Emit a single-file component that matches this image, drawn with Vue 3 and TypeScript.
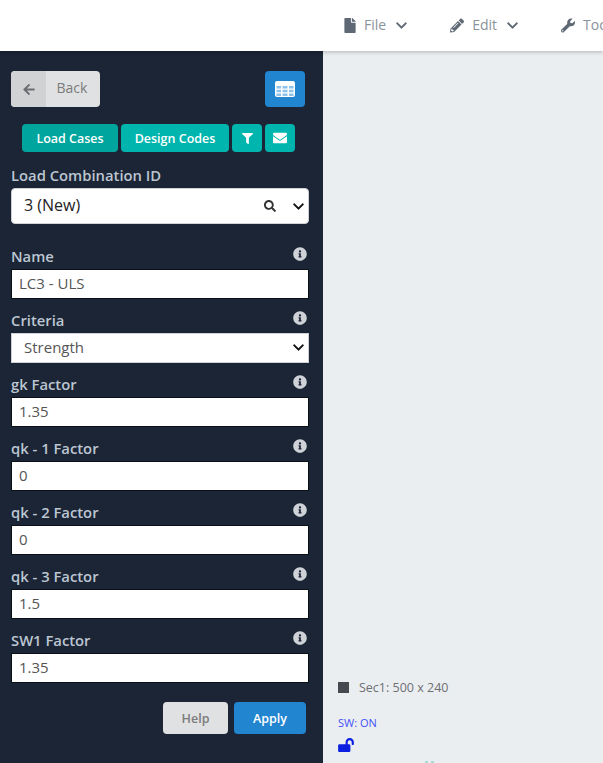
<template>
  <div class="page">
    <header class="topbar">
      <div v-for="item in menuItems" :key="item.label" class="menu-item">
        <svg class="menu-icon" :viewBox="item.viewBox" :style="{ width: item.iconWidth + 'px' }"><path :d="item.icon" /></svg>
        <span class="menu-label">{{ item.label }}</span>
        <svg class="menu-chevron" viewBox="0 0 448 512"><path :d="chevronPath" /></svg>
      </div>
    </header>

    <div class="body">
      <aside class="sidebar">
        <div class="head-row">
          <button class="back-btn">
            <span class="back-icon">
              <svg viewBox="0 0 448 512"><path d="M257.5 445.1l-22.2 22.2c-9.4 9.4-24.6 9.4-33.9 0L7 273c-9.4-9.4-9.4-24.6 0-33.9L201.4 44.7c9.4-9.4 24.6-9.4 33.9 0l22.2 22.2c9.5 9.5 9.3 25-.4 34.3L136.6 216H424c13.3 0 24 10.7 24 24v32c0 13.3-10.7 24-24 24H136.6l120.5 114.8c9.8 9.3 10 24.8.4 34.3z" /></svg>
            </span>
            <span class="back-text">Back</span>
          </button>
          <button class="table-btn">
            <svg viewBox="0 0 20 16">
              <rect width="20" height="16" rx="2" fill="#fff" />
              <path d="M1.5 5H6v2.4H1.5zM7.5 5h5v2.4h-5zM14 5h4.5v2.4H14zM1.5 8.8H6v2.4H1.5zM7.5 8.8h5v2.4h-5zM14 8.8h4.5v2.4H14zM1.5 12.6H6V15H1.5zM7.5 12.6h5V15h-5zM14 12.6h4.5V15H14z" fill="#8fc3ea" />
            </svg>
          </button>
        </div>

        <div class="teal-row">
          <button class="teal-btn active load-cases">Load Cases</button>
          <button class="teal-btn design-codes">Design Codes</button>
          <button class="teal-btn icon-only filter">
            <svg viewBox="0 0 512 512"><path d="M487.976 0H24.028C2.71 0-8.047 25.866 7.058 40.971L192 225.941V432c0 7.831 3.821 15.17 10.237 19.662l80 55.98C298.02 518.69 320 507.493 320 487.98V225.941l184.947-184.97C520.021 25.896 509.338 0 487.976 0z" /></svg>
          </button>
          <button class="teal-btn icon-only mail">
            <svg viewBox="0 0 512 512"><path d="M502.3 190.8c3.9-3.1 9.7-.2 9.7 4.7V400c0 26.5-21.5 48-48 48H48c-26.5 0-48-21.5-48-48V195.6c0-5 5.7-7.8 9.7-4.7 22.4 17.4 52.1 39.5 154.1 113.6 21.1 15.4 56.7 47.8 92.2 47.6 35.7.3 72-32.8 92.3-47.6 102-74.1 131.6-96.3 154-113.7zM256 320c23.2.4 56.6-29.2 73.4-41.4 132.7-96.3 142.8-104.7 173.4-128.7 5.8-4.5 9.2-11.5 9.2-18.9v-19c0-26.5-21.5-48-48-48H48C21.5 64 0 85.5 0 112v19c0 7.4 3.4 14.3 9.2 18.9 30.6 23.9 40.7 32.4 173.4 128.7 16.8 12.2 50.2 41.8 73.4 41.4z" /></svg>
          </button>
        </div>

        <div class="id-block">
          <div class="label id-label">Load Combination ID</div>
          <div class="id-select">
            <span class="id-value">3 (New)</span>
            <svg class="search-icon" viewBox="0 0 512 512"><path d="M505 442.7L405.3 343c-4.5-4.5-10.6-7-17-7H372c27.6-35.3 44-79.7 44-128C416 93.1 322.9 0 208 0S0 93.1 0 208s93.1 208 208 208c48.3 0 92.7-16.4 128-44v16.3c0 6.4 2.5 12.5 7 17l99.7 99.7c9.4 9.4 24.6 9.4 33.9 0l28.3-28.3c9.4-9.4 9.4-24.6.1-34zM208 336c-70.7 0-128-57.2-128-128 0-70.7 57.2-128 128-128 70.7 0 128 57.2 128 128 0 70.7-57.2 128-128 128z" /></svg>
            <svg class="select-chevron" viewBox="0 0 448 512"><path :d="chevronPath" /></svg>
          </div>
        </div>

        <div class="fields">
          <div v-for="field in fields" :key="field.label" class="field">
            <div class="field-head">
              <span class="label">{{ field.label }}</span>
              <svg class="info-icon" viewBox="0 0 512 512"><path d="M256 8C119.043 8 8 119.083 8 256c0 136.997 111.043 248 248 248s248-111.003 248-248C504 119.083 392.957 8 256 8zm0 110c23.196 0 42 18.804 42 42s-18.804 42-42 42-42-18.804-42-42 18.804-42 42-42zm56 254c0 6.627-5.373 12-12 12h-88c-6.627 0-12-5.373-12-12v-24c0-6.627 5.373-12 12-12h12v-64h-12c-6.627 0-12-5.373-12-12v-24c0-6.627 5.373-12 12-12h64c6.627 0 12 5.373 12 12v100h12c6.627 0 12 5.373 12 12v24z" /></svg>
            </div>
            <div v-if="field.isSelect" class="box select-box">
              <span>{{ field.value }}</span>
              <svg class="select-chevron" viewBox="0 0 448 512"><path :d="chevronPath" /></svg>
            </div>
            <div v-else class="box">{{ field.value }}</div>
          </div>
        </div>

        <div class="actions">
          <button class="help-btn">Help</button>
          <button class="apply-btn">Apply</button>
        </div>
      </aside>

      <main class="canvas">
        <div class="legend">
          <span class="swatch"></span>
          <span>Sec1: 500 x 240</span>
        </div>
        <div class="sw-text">SW: ON</div>
        <svg class="lock-icon" viewBox="0 0 576 512"><path d="M423.5 0C339.5.3 272 69.5 272 153.5V224H48c-26.5 0-48 21.5-48 48v192c0 26.5 21.5 48 48 48h352c26.5 0 48-21.5 48-48V272c0-26.5-21.5-48-48-48h-48v-71.1c0-39.6 31.7-72.5 71.3-72.9 40-.4 72.7 32.1 72.7 72v80c0 13.3 10.7 24 24 24h32c13.3 0 24-10.7 24-24v-80C576 68 507.5-.3 423.5 0z" /></svg>
        <div class="cut-marks">
          <span></span>
          <span></span>
        </div>
      </main>
    </div>
  </div>
</template>

<script setup lang="ts">
interface MenuItem {
  label: string
  icon: string
  viewBox: string
  iconWidth: number
}

interface Field {
  label: string
  value: string
  isSelect?: boolean
}

const chevronPath =
  'M207.029 381.476L12.686 187.132c-9.373-9.373-9.373-24.569 0-33.941l22.667-22.667c9.357-9.357 24.522-9.375 33.901-.04L224 284.505l154.745-154.021c9.379-9.335 24.544-9.317 33.901.04l22.667 22.667c9.373 9.373 9.373 24.569 0 33.941L240.971 381.476c-9.373 9.372-24.569 9.372-33.942 0z'

const menuItems: MenuItem[] = [
  {
    label: 'File',
    viewBox: '0 0 384 512',
    iconWidth: 12,
    icon: 'M224 136V0H24C10.7 0 0 10.7 0 24v464c0 13.3 10.7 24 24 24h336c13.3 0 24-10.7 24-24V160H248c-13.2 0-24-10.8-24-24zm160-14.1v6.1H256V0h6.1c6.4 0 12.5 2.5 17 7l97.9 98c4.5 4.5 7 10.6 7 16.9z'
  },
  {
    label: 'Edit',
    viewBox: '0 0 512 512',
    iconWidth: 14,
    icon: 'M497.9 142.1l-46.1 46.1c-4.7 4.7-12.3 4.7-17 0l-111-111c-4.7-4.7-4.7-12.3 0-17l46.1-46.1c18.7-18.7 49.1-18.7 67.9 0l60.1 60.1c18.8 18.7 18.8 49.1 0 67.9zM284.2 99.8L21.6 362.4.4 483.9c-2.9 16.4 11.4 30.6 27.8 27.8l121.5-21.3 262.6-262.6c4.7-4.7 4.7-12.3 0-17l-111-111c-4.8-4.7-12.4-4.7-17.1 0zM124.1 339.9c-5.5-5.5-5.5-14.3 0-19.8l154-154c5.5-5.5 14.3-5.5 19.8 0s5.5 14.3 0 19.8l-154 154c-5.5 5.5-14.3 5.5-19.8 0zM88 424h48v36.3l-64.5 11.3-31.1-31.1L51.7 376H88v48z'
  },
  {
    label: 'Tools',
    viewBox: '0 0 512 512',
    iconWidth: 14,
    icon: 'M507.73 109.1c-2.24-9.03-13.54-12.09-20.12-5.51l-74.36 74.36-67.88-11.31-11.31-67.88 74.36-74.36c6.62-6.62 3.43-17.9-5.66-20.16-47.38-11.74-99.55.91-136.58 37.93-39.64 39.64-50.55 97.1-34.05 147.2L18.74 402.76c-24.99 24.99-24.99 65.51 0 90.5 24.99 24.99 65.51 24.99 90.5 0l213.21-213.21c50.12 16.71 107.47 5.68 147.37-34.22 37.07-37.07 49.7-89.32 37.91-136.73zM64 472c-13.25 0-24-10.75-24-24 0-13.26 10.75-24 24-24s24 10.74 24 24c0 13.25-10.75 24-24 24z'
  }
]

const fields: Field[] = [
  { label: 'Name', value: 'LC3 - ULS' },
  { label: 'Criteria', value: 'Strength', isSelect: true },
  { label: 'gk Factor', value: '1.35' },
  { label: 'qk - 1 Factor', value: '0' },
  { label: 'qk - 2 Factor', value: '0' },
  { label: 'qk - 3 Factor', value: '1.5' },
  { label: 'SW1 Factor', value: '1.35' }
]
</script>

<style>
html,
body {
  margin: 0;
  overflow: hidden;
}
</style>

<style scoped>
.page {
  width: 603px;
  height: 763px;
  display: flex;
  flex-direction: column;
  overflow: hidden;
  font-family: "Open Sans", "Liberation Sans", sans-serif;
  background-color: #ebeef1;
}

.topbar {
  position: relative;
  z-index: 1;
  flex: 0 0 51px;
  display: flex;
  align-items: center;
  padding-left: 344px;
  gap: 43px;
  background-color: #fff;
  box-shadow: 0 1px 4px rgba(0, 0, 0, 0.25);
  white-space: nowrap;
  font-size: 14px;
}

.menu-item {
  display: flex;
  align-items: center;
  flex-shrink: 0;
}

.menu-icon {
  height: 15px;
  fill: #5f6975;
}

.menu-label {
  margin-left: 8px;
  margin-top: -2px;
  color: #8a929b;
}

.menu-chevron {
  width: 11px;
  height: 13px;
  margin-left: 10px;
  fill: #5f6975;
}

.body {
  flex: 1;
  display: flex;
  min-height: 0;
}

.sidebar {
  flex: 0 0 323px;
  box-sizing: border-box;
  padding: 20px 14px 0 11px;
  background-color: #1b2535;
}

.head-row {
  display: flex;
  justify-content: space-between;
  padding-right: 4px;
}

button {
  font-family: inherit;
  border: none;
  padding: 0;
}

.back-btn {
  width: 89px;
  height: 36px;
  display: flex;
  overflow: hidden;
  border-radius: 4px;
  background-color: #e0e1e2;
  color: #7b7b7d;
  font-size: 14px;
}

.back-icon {
  width: 35px;
  height: 100%;
  display: flex;
  align-items: center;
  justify-content: center;
  background-color: #d0d2d4;
}

.back-icon svg {
  width: 12px;
  height: 13px;
  fill: #6b6d70;
}

.back-text {
  flex: 1;
  align-self: center;
  text-align: center;
  margin-top: -3px;
  padding-right: 2px;
}

.table-btn {
  width: 40px;
  height: 36px;
  display: flex;
  align-items: center;
  justify-content: center;
  border-radius: 4px;
  background-color: #2185d0;
}

.table-btn svg {
  width: 20px;
  height: 16px;
}

.teal-row {
  display: flex;
  gap: 3px;
  margin-top: 17px;
  padding-left: 11px;
}

.teal-btn {
  height: 28px;
  border-radius: 4px;
  background-color: #00b5ad;
  color: #fff;
  font-size: 12.5px;
  font-weight: 600;
}

.teal-btn.active {
  background-color: #00a69e;
}

.load-cases {
  width: 96px;
}

.design-codes {
  width: 108px;
}

.icon-only {
  width: 30px;
  display: flex;
  align-items: center;
  justify-content: center;
}

.filter svg {
  width: 11px;
  height: 11px;
}

.mail svg {
  width: 14px;
  height: 14px;
}

.icon-only svg {
  fill: #fff;
}

.id-block {
  margin-top: 13px;
}

.label {
  color: #bcc6d2;
  font-size: 14.8px;
  font-weight: 600;
  line-height: 20px;
}

.id-select {
  display: flex;
  align-items: center;
  height: 36px;
  margin-top: 3px;
  padding: 0 4px 0 12px;
  box-sizing: border-box;
  border-radius: 4px;
  background-color: #fff;
  border: 1px solid #cfd3d8;
  color: #222;
  font-size: 16px;
}

.id-value {
  flex: 1;
  margin-top: -2px;
}

.search-icon {
  width: 12px;
  height: 12px;
  margin-right: 17px;
  fill: #333;
}

.select-chevron {
  width: 11px;
  height: 13px;
  fill: #111;
  flex-shrink: 0;
}

.fields {
  margin-top: 22px;
  display: flex;
  flex-direction: column;
  gap: 11px;
}

.field-head {
  display: flex;
  align-items: flex-start;
  justify-content: space-between;
  padding-right: 2px;
  height: 23px;
}

.info-icon {
  width: 14px;
  height: 14px;
  fill: #cfd3d8;
  margin-top: 1px;
}

.box {
  height: 30px;
  box-sizing: border-box;
  padding: 0 7px 2px;
  display: flex;
  align-items: center;
  background-color: #fff;
  border: 1px solid #0b0f16;
  color: #555;
  font-size: 15px;
}

.select-box {
  justify-content: space-between;
  padding: 0 4px 2px 12px;
  border-color: #cfd3d8;
}

.actions {
  display: flex;
  justify-content: flex-end;
  gap: 6px;
  margin-top: 19px;
  padding-right: 3px;
}

.help-btn,
.apply-btn {
  height: 32px;
  border-radius: 4px;
  font-size: 12.5px;
  font-weight: 600;
}

.help-btn {
  width: 65px;
  background-color: #e0e1e2;
  color: #7b7b7d;
}

.apply-btn {
  width: 72px;
  background-color: #2185d0;
  color: #fff;
}

.canvas {
  flex: 1;
  box-sizing: border-box;
  padding: 628px 0 0 15px;
  overflow: hidden;
  color: #6d6f72;
  font-size: 12.5px;
}

.legend {
  display: flex;
  align-items: center;
  gap: 10px;
  height: 16px;
}

.swatch {
  width: 11px;
  height: 11px;
  background-color: #464a50;
}

.sw-text {
  margin-top: 21px;
  color: #3f51f5;
  font-size: 11px;
  line-height: 14px;
}

.lock-icon {
  display: block;
  width: 16px;
  height: 14px;
  margin-top: 8px;
  fill: #0a1fe0;
}

.cut-marks {
  display: flex;
  gap: 3px;
  margin: 9px 0 0 87px;
}

.cut-marks span {
  width: 3px;
  height: 2px;
  background-color: #a5dbd6;
}
</style>
